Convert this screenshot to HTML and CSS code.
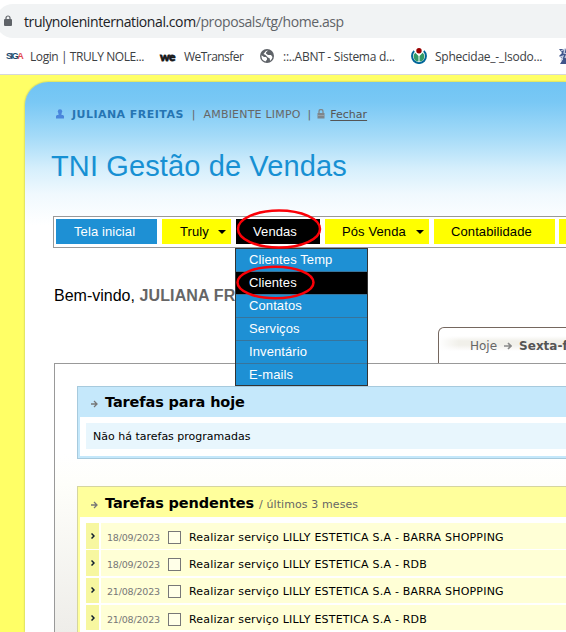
FILE: index.html
```html
<!DOCTYPE html>
<html lang="pt-BR">
<head>
<meta charset="utf-8">
<title>TNI Gestão de Vendas</title>
<link rel="stylesheet" href="styles.css">
</head>
<body>
<header class="browser">
  <div class="address">
    <svg class="lock" width="8" height="12" viewBox="0 0 8 12"><path d="M2 5V3a2 2 0 0 1 4 0v2" fill="none" stroke="#5f6368" stroke-width="1.2"/><rect y="4" width="8" height="7" rx="1" fill="#5f6368"/></svg>
    <span class="url">trulynoleninternational.com<span class="path">/proposals/tg/home.asp</span></span>
  </div>
  <nav class="bookmarks">
    <span class="bm bm-login"><b class="siga">SIG<i>A</i></b><span>Login | TRULY NOLE...</span></span>
    <span class="bm bm-we"><b class="we">we</b><span>WeTransfer</span></span>
    <span class="bm bm-abnt"><svg width="14" height="14" viewBox="0 0 14 14"><circle cx="7" cy="7" r="7" fill="#5f6368"/><path d="M1.5 6.3 4 8h2l1 1.200v1.300L5.500 12.500A5.700 5.700 0 0 1 1.500 6.300ZM8 1.500 6 3.500v1L8 6h3l1.500 2A5.600 5.600 0 0 1 10 12l-.2-2.500L8 8.500 5.500 6 3.500 5 6 2Z" fill="#fff"/></svg><span>::..ABNT - Sistema d...</span></span>
    <span class="bm bm-sph"><svg width="16" height="16" viewBox="0 0 16 16"><path d="M3.200 3A7 7 0 1 0 12.800 3" fill="none" stroke="#069" stroke-width="1.900"/><path d="M4.300 4.800a5 5 0 0 0 3.200 8.700V8ZM11.700 4.800a5 5 0 0 1-3.200 8.700V8Z" fill="#396"/><circle cx="8" cy="2.700" r="2.700" fill="#900"/></svg><span>Sphecidae_-_Isodo...</span></span>
    <svg class="bm-last" width="16" height="16" viewBox="0 0 16 16"><path d="M0 1h16v15H1l3-5-4-3 3-3Z" fill="#40558b"/><path d="m2 3 4-2-1 4 3 1-2 4M1 9l3-1-2 5" fill="none" stroke="#c5cee2" stroke-width="1.300"/></svg>
  </nav>
</header>
<div class="frame">
<main class="page">
  <div class="user">
    <svg class="person" width="8" height="10" viewBox="0 0 8 10"><circle cx="4" cy="2.500" r="2.200" fill="#4a86dc"/><path d="M2.500 4h3v2H7l1 1v2.500H0V7l1-1h1.500Z" fill="#4a86dc"/></svg>
    <b>JULIANA FREITAS</b><span class="sep">|</span><span class="company">AMBIENTE LIMPO</span><span class="sep sep2">|</span>
    <svg class="lock2" width="8" height="10" viewBox="0 0 8 10"><path d="M2 5V2.500a2 2 0 0 1 4 0V5" fill="none" stroke="#7e868b" stroke-width="1.300"/><rect x=".5" y="4" width="7" height="5.500" fill="#7e868b"/><path d="M1 6.500h6" stroke="#a4adb2" stroke-width=".7"/></svg>
    <a>Fechar</a>
  </div>
  <h1>TNI Gestão de Vendas</h1>
  <nav class="menu">
    <span class="item home">Tela inicial</span>
    <span class="item truly">Truly<i class="caret"></i></span>
    <span class="item vendas">Vendas
      <span class="drop"><span>Clientes Temp</span><span class="on">Clientes</span><span>Contatos</span><span>Serviços</span><span>Inventário</span><span>E-mails</span></span>
      <svg class="marks" width="86" height="94" viewBox="0 0 86 94"><g fill="none" stroke="#fb0007" stroke-width="2.500"><ellipse cx="43" cy="20" rx="41" ry="18.500"/><ellipse cx="39.500" cy="73.500" rx="38" ry="15.800"/></g></svg>
    </span>
    <span class="item pos">Pós Venda<i class="caret"></i></span>
    <span class="item cont">Contabilidade</span>
    <span class="item rest"></span>
  </nav>
  <p class="welcome">Bem-vindo, <b>JULIANA FR</b></p>
  <div class="tab"><span class="today">Hoje</span><svg class="arrow" width="8" height="8" viewBox="0 0 8 8"><path d="M0 4h6M4 1l3 3-3 3" fill="none" stroke="#898989" stroke-width="1.600"/></svg><b>Sexta-feira</b></div>
  <section class="content">
    <div class="panel blue">
      <h2><svg class="arrow" width="7" height="8" viewBox="0 0 7 8"><path d="M0 4h6M3 1l3 3-3 3" fill="none" stroke="#777" stroke-width="1.300"/></svg>Tarefas para hoje</h2>
      <div class="body"><div class="empty">Não há tarefas programadas</div></div>
    </div>
    <div class="panel yellow">
      <h2><svg class="arrow" width="7" height="8" viewBox="0 0 7 8"><path d="M0 4h6M3 1l3 3-3 3" fill="none" stroke="#777" stroke-width="1.300"/></svg>Tarefas pendentes<small>/ últimos 3 meses</small></h2>
      <div class="body">
        <div class="row"><span class="go"><svg width="4" height="6" viewBox="0 0 4 6"><path d="m.5 .5 2.500 2.500L.5 5.500" fill="none" stroke="#102030" stroke-width="1.500"/></svg></span><span class="task"><time>18/09/2023</time><i class="box"></i><span>Realizar serviço LILLY ESTETICA S.A - BARRA SHOPPING</span></span></div>
        <div class="row"><span class="go"><svg width="4" height="6" viewBox="0 0 4 6"><path d="m.5 .5 2.500 2.500L.5 5.500" fill="none" stroke="#102030" stroke-width="1.500"/></svg></span><span class="task"><time>18/09/2023</time><i class="box"></i><span>Realizar serviço LILLY ESTETICA S.A - RDB</span></span></div>
        <div class="row"><span class="go"><svg width="4" height="6" viewBox="0 0 4 6"><path d="m.5 .5 2.500 2.500L.5 5.500" fill="none" stroke="#102030" stroke-width="1.500"/></svg></span><span class="task"><time>21/08/2023</time><i class="box"></i><span>Realizar serviço LILLY ESTETICA S.A - BARRA SHOPPING</span></span></div>
        <div class="row"><span class="go"><svg width="4" height="6" viewBox="0 0 4 6"><path d="m.5 .5 2.500 2.500L.5 5.500" fill="none" stroke="#102030" stroke-width="1.500"/></svg></span><span class="task"><time>21/08/2023</time><i class="box"></i><span>Realizar serviço LILLY ESTETICA S.A - RDB</span></span></div>
      </div>
    </div>
  </section>
</main>
</div>
</body>
</html>
```
FILE: styles.css
```css
* { box-sizing: border-box; }
body { margin: 0; width: 566px; height: 632px; overflow: hidden; display: flex; flex-direction: column; background: #fff; font: 11px "DejaVu Sans", sans-serif; color: #000; white-space: nowrap; }
svg { display: block; flex: none; }
.browser { height: 75px; flex: none; padding-top: 4px; border-bottom: 1px solid #d5d7da; font-family: "Open Sans", sans-serif; }
.address { height: 34px; background: #f1f3f4; border-radius: 17px 0 0 17px; margin-left: -4px; padding-left: 8px; display: flex; align-items: center; }
.url { margin-left: 12px; font-size: 14px; color: #202124; letter-spacing: -.4px; }
.path { color: #5f6368; }
.bookmarks { display: flex; align-items: center; height: 36px; font-size: 12px; color: #3c4043; }
.bm { display: flex; align-items: center; flex: none; }
.bm-login { width: 154px; padding-left: 6px; letter-spacing: -.42px; }
.siga { width: 24px; font: bold 9px "Liberation Sans", sans-serif; letter-spacing: -1.400px; color: #174a70; }
.siga i { font-style: normal; color: #e34850; }
.bm-we { width: 106px; padding-left: 6px; letter-spacing: -.55px; }
.we { width: 24px; font: 900 12px Lato, sans-serif; letter-spacing: -.6px; color: #17191b; -webkit-text-stroke: .8px #17191b; }
.bm-abnt { width: 151px; gap: 9px; letter-spacing: -.26px; }
.bm-sph { width: 148px; gap: 8px; letter-spacing: -.25px; }
.frame { flex: 1; min-height: 0; background: #ffff66; padding: 7px 0 0 25px; overflow: hidden; }
.page { height: 550px; width: 541px; background: linear-gradient(#70c4f4 0, #79c8f5 20px, #a5dbf8 55px, #d6effc 87px, #f0f9fe 112px, #fff 143px); border-radius: 23px 0 0 0; box-shadow: 0 0 2px #98a45b; padding-top: 23px; overflow: hidden; }
.user { height: 18px; display: flex; align-items: center; padding-left: 31px; color: #666; }
.user b { margin-left: 8px; color: #2675b3; font-size: 11px; letter-spacing: .46px; }
.company { letter-spacing: .2px; }
.sep { margin: 0 8px; }
.user .sep2 { margin: 0 6px 0 7px; }
.user a { margin-left: 5px; color: #555; text-decoration: underline; text-underline-offset: 2px; }
h1 { margin: 0; height: 86px; padding: 0 0 0 26px; font: 29px/86px "Liberation Sans", sans-serif; letter-spacing: .12px; color: #1790d3; }
.menu { margin: 7px 0 0 28px; height: 32px; width: 530px; padding: 2px; border: 1px solid #999; background: #fff; display: flex; align-items: flex-start; font: 13px/25px "Liberation Sans", sans-serif; letter-spacing: .1px; }
.item { height: 25px; flex: none; background: #ff0; display: flex; align-items: center; padding-left: 18px; }
.home { width: 101px; background: #1e90d4; color: #fff; margin-right: 5px; }
.truly { width: 69px; margin-right: 5px; }
.vendas { width: 84px; background: #000; color: #fff; margin-right: 5px; position: relative; padding-left: 17px; }
.pos { width: 104px; margin-right: 5px; padding-left: 17px; }
.cont { width: 121px; margin-right: 4px; padding-left: 17px; }
.rest { width: 40px; }
.caret { border: 4px solid transparent; border-top-color: #000; border-bottom: 0; margin: 1px 5px 0 auto; }
.drop { position: absolute; z-index: 2; left: -1px; top: 29px; width: 133px; height: 138px; border: 1px solid #333; background: #1e90d4; display: grid; grid-template-rows: repeat(6, 1fr); line-height: 22px; }
.drop span { padding-left: 13px; border-bottom: 1px solid #38749b; }
.drop .on { background: #000; }
.drop span:last-child { border-bottom: 0; }
.marks { position: absolute; z-index: 3; left: 0; top: -10px; }
.welcome { margin: 0; height: 79px; padding: 37px 0 0 29px; font: 16px/22px "Liberation Sans", sans-serif; }
.welcome b { color: #666; letter-spacing: .15px; }
.tab { width: 140px; height: 36px; margin-left: 413px; border: 1px solid #75675f; border-bottom: 0; border-top-left-radius: 6px; display: flex; align-items: center; padding-left: 31px; font-size: 12px; color: #666; background: linear-gradient(90deg, #fff 0, #fff0 20px), linear-gradient(#fff 8px, #f1f0ea 13px, #f1f0ea 17px, #fff 23px); }
.tab .arrow { margin: 0 7px 0 7px; }
.tab b { color: #555; }
.content { margin-left: 29px; height: 330px; border: 1px solid #999; border-right: 0; padding: 22px 0 0 22px; background: linear-gradient(#fff 90px, #fefefa 120px, #eeede9 270px); }
.panel { width: 530px; border: 1px solid; }
.panel h2 { margin: 0; height: 30px; padding-left: 13px; display: flex; align-items: center; font-size: 14.500px; letter-spacing: -.12px; }
.panel h2 .arrow { margin: 4px 7px 0 0; }
.blue { height: 73px; background: #c5e8fb; border-color: #a7cadd; margin-bottom: 27px; }
.yellow { background: #ffff9c; border-color: #d5d5a0; }
.yellow h2 { padding-top: 2px; }
.body { margin: 0 2px; background: #fff; padding: 6px; }
.blue .body { height: 39px; }
.empty { height: 26px; padding-left: 7px; line-height: 28px; background: #e8f6fd; }
.panel small { font-size: 11px; font-weight: normal; color: #666; margin: 2px 0 0 5px; letter-spacing: .1px; }
.row { display: flex; gap: 2px; height: 27.300px; }
.go { width: 13px; height: 25.500px; background: #f7f7a0; display: flex; align-items: center; justify-content: center; }
.task { height: 25.500px; flex: 1; background: #ffffd6; display: flex; align-items: center; padding: 3px 0 0 6px; letter-spacing: .21px; }
time { width: 61px; font-size: 9.500px; letter-spacing: -.18px; color: #777; }
.box { width: 13px; height: 13px; border: 1px solid #777; background: #ffffe8; margin-right: 8px; }
```
